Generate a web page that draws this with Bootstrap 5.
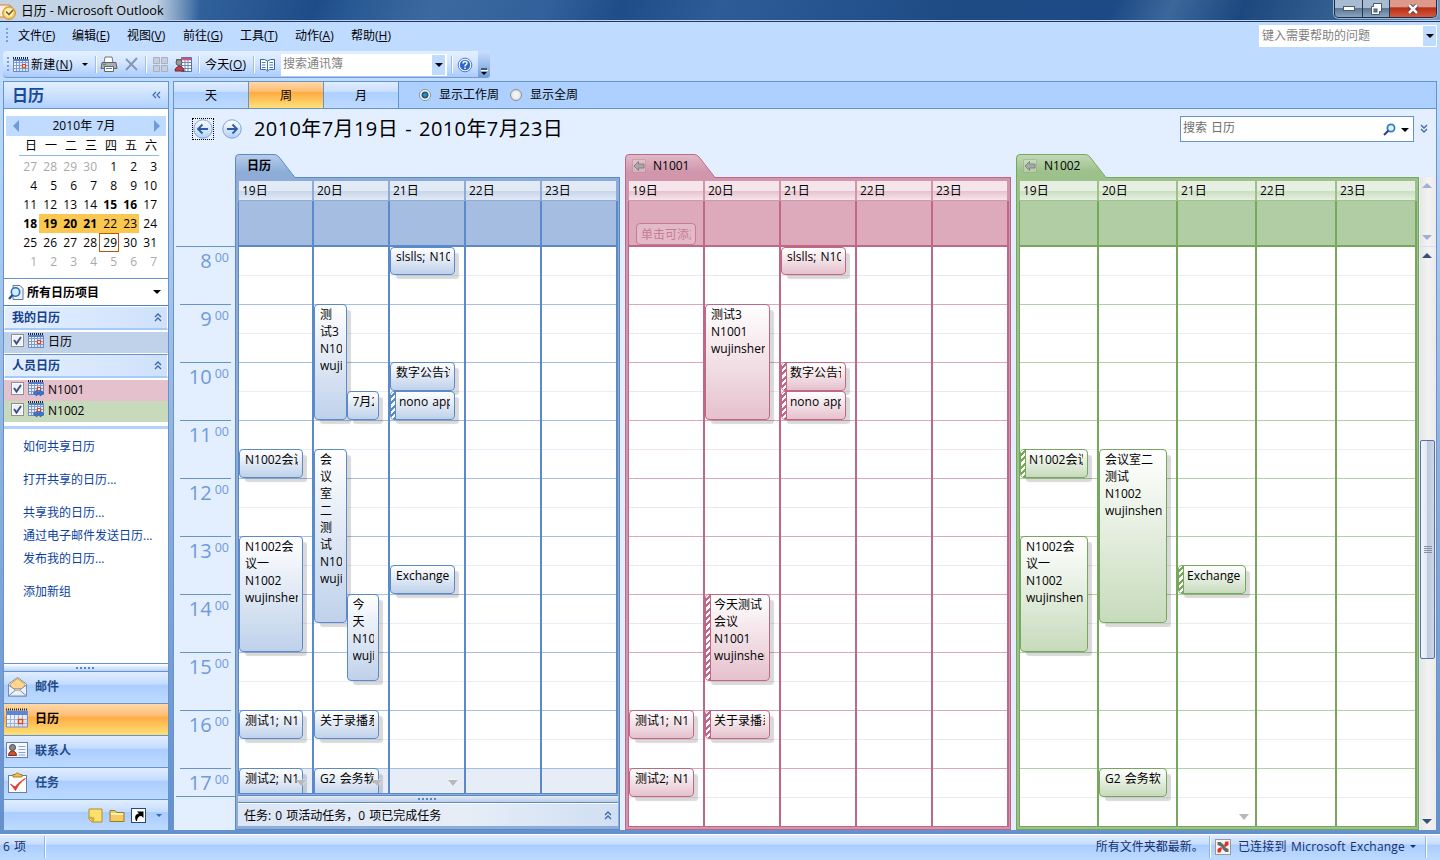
<!DOCTYPE html>
<html lang="zh-CN">
<head>
<meta charset="utf-8">
<title>日历 - Microsoft Outlook</title>
<link href="https://cdn.jsdelivr.net/npm/bootstrap@5.3.0/dist/css/bootstrap.min.css" rel="stylesheet">
<style>
:root{--line:#6593cf;--ink:#15428b}
body{font:12px/17px "Open Sans","Noto Sans CJK SC",sans-serif;word-spacing:1px;color:#000;background:#bfdbff;height:860px;overflow:hidden}
u{text-underline-offset:1px}
svg{display:block;flex:none}
.titlebar{height:22px;border-bottom:1px solid #20365c;box-shadow:inset 0 -1px #b9d3f2;padding-right:3px;
 background:linear-gradient(90deg,#c3d4e6 0,#c3d4e6 155px,rgba(195,212,230,0) 200px),linear-gradient(115deg,#6d8fb8 0,#31619a 14%,#1e4c88 22%,#275792 24%,#3c699f 30%,#31609a 38%,#1f4d88 43%,#2d5c97 50%,#1e4b84 66%,#1d4a84 77%,#3b679b 81%,#1c487f 86%,#3c6898 95%,#7899bc 100%)}
.titlebar b{font-weight:400;font-size:12.7px;margin-left:5px;word-spacing:0}
.winbtns{height:18px;border:1px solid #1b2d48;border-top:0;border-radius:0 0 5px 5px;overflow:hidden;box-shadow:0 0 0 1px #9db7d3}
.winbtns span{display:flex;align-items:center;justify-content:center;border-right:1px solid #26394f;background:linear-gradient(#a9bbd0 0 45%,#5a7391 46%,#8ba5bf)}
.winbtns .w-min{width:28px}.winbtns .w-max{width:27px}
.winbtns .w-close{width:46px;border:0;background:linear-gradient(#dd9a8c 0 40%,#b82d16 46%,#d3593c)}
.menurow{height:28px;padding-left:6px}
.menugrid{display:grid;grid-template-columns:12px 54px 55px 56px 57px 55px 56px 60px;align-items:center;padding-bottom:1px}
.grip{width:2px;height:15px;background:repeating-linear-gradient(#7aa0d4 0 2px,transparent 2px 4px)}
.helpbox{width:178px;height:22px;background:#fff;margin:3px 3px 0 0;color:#7f7f7f;padding:0 1px 2px 3px}
.dropbox{width:13px;align-self:stretch;margin:1px 0 -1px;background:#bfdbff}
.caret{width:0;height:0;border:4px solid transparent;border-top-color:#000;border-bottom:0}
.caret-s{border-width:3px;border-bottom:0}
.toolrow{height:27px;margin:1px 0 3px 3px;width:487px;display:grid;align-items:center;border-radius:4px;border-bottom:1px solid #6f9cd8;
 grid-template-columns:4px 6px 18px 46px 16px 7px 20px 23px 8px 20px 25px 7px 48px 7px 20px 3px 166px 8px 20px 3px 12px;background:linear-gradient(#e3efff,#d3e5ff 45%,#a9cbfa)}
.toolrow>span:not(.toolend){padding-bottom:1px}
.tsep{width:2px;height:17px;margin-left:2px;background:linear-gradient(90deg,#9abfee 50%,#fff 50%)}
.abox{height:22px;background:#fff;color:#7f7f7f;padding:0 2px 2px 2px}
.toolend{height:27px;border-radius:0 4px 4px 0;background:linear-gradient(#c9defc,#6f9cdc)}
.stage{height:753px;background:linear-gradient(#bfdbff,#8eb1df 50%,#6591cd 97%);padding:0 3px 4px;gap:4px}
.side{width:166px;border:1px solid var(--line);border-bottom:0;background:#fff}
.bluehead{height:27px;background:linear-gradient(#e3efff,#c9dfff 55%,#b1d1ff);border-bottom:1px solid var(--line)}
.side .bluehead b{font-size:16px;color:#1b4a9a;padding-left:8px}
.monthbar{height:20px;margin:7px 2px 0;background:#bfdbff;padding:0 7px}
.monthbar span{margin:-2px 5px 0 0;letter-spacing:.1px}
.tri-l,.tri-r{width:0;height:0;border:6px solid transparent}
.tri-l{border-right-color:#6f9cd8;border-left:0}.tri-r{border-left-color:#6f9cd8;border-right:0;margin-right:-1px}
.dategrid{display:grid;grid-template-columns:repeat(7,20px);margin:0 0 0 15px;width:140px;text-align:right;grid-template-rows:21px}
.dategrid span{height:19px;line-height:19px;padding-right:2px}
.dategrid .wk{height:20px;line-height:19px;border-bottom:1px solid #8db8f0}
.dategrid .off{color:#a9a9a9}.dategrid .sel{background:#fac750}.dategrid .today{outline:1px solid #bb5503;outline-offset:-1px}
.datewrap{height:143px;border-bottom:1px solid var(--line)}
.allitems{height:27px;padding:0 7px 0 4px;border-bottom:1px solid #4f7fc0}
.grouphead{height:24px;background:linear-gradient(90deg,#e3efff,#cfe1fb);border:1px solid #fff;border-bottom:2px solid #a6cafa;color:var(--ink);font-weight:700;padding:0 5px 0 7px}
.grouphead.lined{border-top-color:var(--line)}
.calrow{height:21px;padding:0 0 2px 7px;gap:4px}
.calrow svg{margin-top:-2px}
.row-b{background:#c0d1ea;margin:2px 0 1px}.row-p{background:#e5c1cd;margin-top:2px}.row-g{background:#c7dbbc}
.chk{width:13px;height:13px;border:1px solid #8e8f8f;background:#eef2f7;margin-top:-3px;box-shadow:inset 0 0 0 1px #fff}
.chk svg{margin:0!important}
.bluerule{height:3px;margin-top:4px;background:#b1d1ff;flex:none}
.linkz{padding:9px 0 0 19px;color:#0a3fa0}
.linkz div{height:23px;line-height:17px}.linkz .gapb{height:33px}
.split{height:8px;border-top:1px solid var(--line);background:linear-gradient(#fff,#b7d3fb)}
.dots{width:20px;height:2px;background:repeating-linear-gradient(90deg,#5a87c8 0 2px,transparent 2px 4px)}
.navbtn{height:32px;border-top:1px solid var(--line);background:linear-gradient(#e0edff,#c5dcff 40%,#aacdff 41%,#bedaff);color:#244b86;font-weight:700;gap:6px;padding:0 0 2px 1px}
.navbtn.on{background:linear-gradient(#ffd9aa,#ffbb6e 40%,#ffab3f 41%,#fee17b);color:#000}
.navtail{height:31px;border-top:1px solid var(--line);background:linear-gradient(#e0edff,#c5dcff 40%,#aacdff 41%,#bedaff);padding-right:6px;gap:6px}
.view{border:1px solid var(--line);border-bottom:0;background:#e3efff;min-width:0}
.vtabs{height:27px;background:#add0ff;border-bottom:1px solid var(--line)}
.vtab{width:75px;border-right:1px solid var(--line);background:linear-gradient(#e0edff,#c9dfff 38%,#add0ff 40%,#bedaff)}
.vtab.on{background:linear-gradient(#ffd9aa,#ffbb6e 38%,#ffab3f 40%,#fee17b)}
.radios{padding:0 0 1px 20px}.radios span{margin:0 11px 0 8px}
.radio{width:12px;height:12px;border:1px solid #8e8f8f;border-radius:50%;background:radial-gradient(#f2f2f2 30%,#d5d5d5)}
.radio.on{background:radial-gradient(#2e95c6 0 1px,#174a78 3px,#fff 4px)}
.range{height:45px;padding:7px 4px 0 18px}
.range h1{font-size:20px;line-height:26px;font-weight:400;letter-spacing:.4px;word-spacing:1.5px;margin:0 0 0 11px}
.findbox{width:234px;height:26px;border:1px solid var(--line);background:#fff;color:#6d6d6d;padding:0 4px 3px 2px}
.arrowball{margin-top:2px}.arrowball+.arrowball{margin-left:7px}
.focusdots{outline:1px dotted #000;outline-offset:-1px}
.board{height:676px}
.ruler{width:61px;padding-top:92px;color:#6f9bd8}
.ruler .hr{height:58px;border-top:1px solid var(--line);margin:0 4px 0 6px;display:flex;justify-content:flex-end;padding-right:2px}
.ruler .hr:first-child{margin:0 0 0 2px;padding-right:6px}
.ruler .hr:last-child{height:28px}
.hr b{font:400 20px/28px "Open Sans";margin-right:3px}
.hr sup{font:400 12.5px/21px "Open Sans";top:0}
.rulerend{height:1px;background:var(--line);margin-left:2px}
.cal{flex:none}
.cal-b{--edge:#5b8aca;--band:#8dadd8;--hd1:#e2eaf5;--hd2:#c8d7ec;--day:#a5bde0;--hour:#a5bfe1;--half:#e6edf7;--ev:#bfd1ea;width:385px;margin-right:5px}
.cal-p{--edge:#bf6786;--band:#d196ab;--hd1:#f5e5eb;--hd2:#e6c3cf;--day:#dcaabb;--hour:#dca9bb;--half:#f2e5ea;--ev:#e5c1cd;width:386px;margin-right:5px}
.cal-g{--edge:#77a75d;--band:#9dc18a;--hd1:#e6efe1;--hd2:#cbdfc1;--day:#b1cda4;--hour:#b2cfa5;--half:#e9f0e6;--ev:#c7dbbc;width:403px}
.caltab{height:24px;position:relative}
.caltab>svg{position:absolute;left:0;top:0;z-index:1}
.caltab span{position:relative;z-index:2;display:flex;align-items:center;height:23px;padding-left:7px;gap:7px}
.caltab .own{font-weight:700;padding-left:12px}
.calbody{height:653px;border:1px solid var(--edge);background:var(--band);padding:3px 1px 2px 2px;margin-top:-1px}
.days{display:grid}
.dhead{height:20px;line-height:19px;padding-left:3px;background:linear-gradient(var(--hd1),var(--hd1) 50%,var(--hd2) 55%,var(--hd1));border-right:2px solid var(--band);border-bottom:1px solid var(--band)}
.dhead:first-child,.dall:first-child,.dtime:first-child{border-left:1px solid var(--edge)}
.dhead:first-child{border-left-color:var(--band)}
.dall{height:46px;background:var(--day);border-right:2px solid var(--edge);border-bottom:2px solid var(--edge)}
.dtime{--lines:linear-gradient(transparent 57px,var(--hour) 57px) 0 0/100% 58px,linear-gradient(transparent 28px,var(--half) 28px 29px,transparent 29px) 0 0/100% 58px;
 position:relative;border-right:2px solid var(--edge);display:grid;grid-template-columns:1fr 1fr;grid-template-rows:28px repeat(19,29px);padding-right:9px;min-width:0;background:var(--lines),#fff}
.timegrid{height:580px;overflow:hidden}
.cal-p .timegrid,.cal-g .timegrid{border-bottom:1px solid var(--edge)}
.cal-b .timegrid{height:547px;border-bottom:1px solid var(--edge)}
.cal-b .dtime{background:linear-gradient(var(--half),var(--half)) 0 522px/100% 30px no-repeat,var(--lines),#fff}
.ev{border:1px solid var(--edge);border-radius:4px;background:linear-gradient(#fff,var(--ev));box-shadow:5px 5px 1px -1px rgba(0,0,0,.15);min-width:0;display:flex}
.ev p{margin:1px 4px 0 5px;overflow:hidden;flex:1;min-width:0}
.ev.top p{margin-top:0}
.ev p span{display:block;white-space:nowrap}
.ev.tent:before{content:"";width:5px;flex:none;border-right:1px solid var(--edge);border-radius:3px 0 0 3px;background:repeating-linear-gradient(135deg,#fff 0 2.5px,var(--edge) 2.5px 4.5px)}
.ev.tent p{margin-left:3px}
.addhint{margin:22px 7px 0 7px;height:22px;border:1px solid #c77b96;border-radius:4px;color:#c77b96;background:#e3bac8;overflow:hidden;white-space:nowrap;padding:2px 4px 0 4px}
.addhint span{display:block;overflow:hidden}
.more{position:absolute;width:0;height:0;border:5px solid transparent;border-top:6px solid #b9b9b9;border-bottom:0;filter:drop-shadow(0 0 1px #fff);right:6px;top:533px}
.cal-g .more{top:567px}
.taskbar{background:linear-gradient(90deg,#dce6f4,#e6edf7 60%,#d0dff2);height:23px;border-top:1px solid #fff;padding:0 6px 0 6px}
.tasksplit{height:8px;margin-top:1px;border-top:1px solid var(--edge);border-bottom:1px solid var(--edge);background:linear-gradient(#e3ebf6,#b9cde8)}
.bars{width:17px;margin-top:23px}
.sb{background:linear-gradient(90deg,#e6e6e6,#f3f3f3 50%,#ebebeb);width:16px;margin-left:1px}
.sb-s{height:69px;padding:6px 0 6px}
.sb-l{height:584px;border-top:1px solid #cfe0f7;padding:6px 0 5px}
.ar{width:0;height:0;border:5px solid transparent;border-top:5px solid #3b5079;border-bottom:0;margin:0 auto 0 2px}
.ar.up{border-top:0;border-bottom:5px solid #3b5079}
.ar.dim{border-top-color:#9fb0d6}.ar.up.dim{border-bottom-color:#9fb0d6}
.thumb{height:219px;width:15px;margin-top:182px;margin-bottom:160px;border:1px solid #5a70a0;border-radius:2px;background:linear-gradient(90deg,#f0f3f9,#e4e9f2 45%,#bccadf 50%,#ccd7e8)}
.gripper{width:8px;height:7px;background:repeating-linear-gradient(#8290a8 0 1px,transparent 1px 2px)}
.status{height:26px;color:#15306a;background:linear-gradient(#fff 0 1px,#e0edff 1px,#c5dcff 40%,#aacdff 41%,#bedaff);padding:0 13px 1px 3px}
.ssep{width:2px;height:22px;background:linear-gradient(90deg,#8fb5e8 50%,#fff 50%)}
.count{width:41px}
.conn{margin:0 5px 0 7px;letter-spacing:.2px}
</style>
</head>
<body class="d-flex flex-column">
<svg width="0" height="0" class="position-absolute">
 <defs>
  <linearGradient id="gb" x2="0" y2="1"><stop stop-color="#b9cde9"/><stop offset=".7" stop-color="#8dadd8"/></linearGradient>
  <linearGradient id="gp" x2="0" y2="1"><stop stop-color="#e2bac8"/><stop offset=".7" stop-color="#d196ab"/></linearGradient>
  <linearGradient id="gg" x2="0" y2="1"><stop stop-color="#c2d9b6"/><stop offset=".7" stop-color="#9dc18a"/></linearGradient>
  <linearGradient id="ball" x2="0" y2="1"><stop stop-color="#fff"/><stop offset="1" stop-color="#b4d0f5"/></linearGradient>
  <linearGradient id="sheet" x2="1" y2="1"><stop stop-color="#fff"/><stop offset="1" stop-color="#cfdcf3"/></linearGradient>
  <symbol id="cal" viewBox="0 0 16 16"><path d="M0 1h16" stroke="#222" stroke-width="2" stroke-dasharray="1 1"/><path d="M.5 2.500h15v12h-15z" fill="url(#sheet)" stroke="#6d88bd"/><path d="M1 2h14v2H1z" fill="#4f7bd0"/><path d="M3.500 4v10M6.500 4v10M9.500 4v10M12.500 4v10M1 5.500h14M1 8.500h14M1 11.500h14" stroke="#7f9bd0"/><path d="M9.500 7.500h3v3h-3z" fill="#fff" stroke="#e2481c" stroke-width="1.200"/></symbol>
  <symbol id="up2" viewBox="0 0 8 9"><path d="M1 4l3-3 3 3M1 8l3-3 3 3" fill="none" stroke="#3b68ad" stroke-width="1.300"/></symbol>
  <symbol id="shareic" viewBox="0 0 16 17"><use href="#cal" width="16" height="16"/><path d="M5 13l4-3v2h3v-2l4 3-4 3v-2H9v2z" fill="#3e78cf" stroke="#2a58a3" stroke-width=".6"/></symbol>
  <symbol id="ck" viewBox="0 0 11 11"><path d="M2 5l2.500 3.500L9 2" fill="none" stroke="#3c4f86" stroke-width="1.900"/></symbol>
  <symbol id="back" viewBox="0 0 14 14"><rect x=".5" y=".5" width="13" height="13" rx="1" fill="#fff" fill-opacity=".22" stroke="#888" stroke-opacity=".35"/><path d="M2 7l4.500-4.500V5H12v4H6.500v2.500z" fill="#a9a9a9" stroke="#7d7d7d" stroke-width=".9"/></symbol>
 </defs>
</svg>

<header class="titlebar d-flex align-items-center justify-content-between">
 <div class="d-flex align-items-center">
  <svg width="16" height="20" viewBox="0 0 16 20"><rect x="-2" y="4" width="13" height="12" rx="2" fill="#fff0dc" stroke="#e8782d"/><circle cx="9" cy="12" r="6.300" fill="#f6cf65" stroke="#c58a22"/><circle cx="9" cy="11.500" r="4.300" fill="#fff3c8"/><path d="M6 10.500l3 3 4-4.500" fill="none" stroke="#8b5a17" stroke-width="1.700"/></svg>
  <b>日历 - Microsoft Outlook</b>
 </div>
 <div class="winbtns d-flex align-self-start">
  <span class="w-min"><svg width="12" height="5"><rect x=".5" y=".5" width="11" height="4" fill="#fff" stroke="#4a5870"/></svg></span>
  <span class="w-max"><svg width="12" height="12"><path d="M3.500 .5h8v8h-2v3h-8v-8h2z" fill="#fff" stroke="#4a5870"/><rect x="4" y="6" width="3" height="3" fill="#6a83a0" stroke="#4a5870"/></svg></span>
  <span class="w-close"><svg width="12" height="10"><path d="M2 1l8 8M10 1L2 9" stroke="#4a3038" stroke-width="4.200"/><path d="M2 1l8 8M10 1L2 9" stroke="#fff" stroke-width="2.500"/></svg></span>
 </div>
</header>

<div class="menurow d-flex justify-content-between">
 <nav class="menugrid"><i class="grip"></i><span>文件(<u>F</u>)</span><span>编辑(<u>E</u>)</span><span>视图(<u>V</u>)</span><span>前往(<u>G</u>)</span><span>工具(<u>T</u>)</span><span>动作(<u>A</u>)</span><span>帮助(<u>H</u>)</span></nav>
 <div class="helpbox d-flex align-items-center justify-content-between">键入需要帮助的问题<span class="dropbox d-flex align-items-center justify-content-center"><i class="caret"></i></span></div>
</div>

<div class="toolrow">
 <i></i><i class="grip"></i>
 <svg width="16" height="16"><use href="#cal"/></svg>
 <span class="text-nowrap" style="letter-spacing:.35px">新建(<u>N</u>)</span>
 <i class="caret caret-s" style="margin-left:5px"></i><i class="tsep"></i>
 <svg width="18" height="17" viewBox="0 0 18 17"><path d="M5 1h7l1 6H4z" fill="#fff" stroke="#777"/><path d="M2 6.500h14l1 6H1z" fill="#a8adb8" stroke="#5d6470"/><path d="M4.500 10.500h9v5h-9z" fill="#fff" stroke="#666"/><path d="M6 12.500h6" stroke="#4e81cf"/><path d="M3 8.500h3" stroke="#5c9c3e" stroke-width="1.500"/></svg>
 <svg width="20" height="15" viewBox="0 0 20 15"><path d="M6 2l11 11M17 1L6 13" stroke="#8296ba" stroke-width="1.900" fill="none"/></svg>
 <i class="tsep"></i>
 <svg width="18" height="16" viewBox="0 0 18 16"><path d="M2.500.5h6v6h-6zM10.500.5h6v6h-6zM2.500 8.500h6v6h-6zM10.500 8.500h6v6h-6z" fill="#c7ced8" stroke="#a5b1c2"/></svg>
 <svg width="22" height="17" viewBox="0 0 22 17"><path d="M10.500 1.500h10v14h-10z" fill="#fff" stroke="#5472a7"/><path d="M11 3h9" stroke="#d55087" stroke-width="2.500"/><path d="M11 6.500h9M11 9.500h9M11 12.500h9M14 4v11M17 4v11" stroke="#6e89b9"/><rect x="5" y="3" width="6" height="5" fill="#777"/><circle cx="8" cy="6.500" r="3" fill="#999" stroke="#555"/><path d="M4 15c0-6 9-6 9 0z" fill="#c83c45" stroke="#6f2730"/></svg>
 <i class="tsep"></i>
 <span class="text-nowrap" style="padding-left:2px;letter-spacing:.15px">今天(<u>O</u>)</span>
 <i class="tsep"></i>
 <svg width="18" height="15" viewBox="0 0 18 15"><path d="M2.500 2.500h4L9.500 4l3-1.500h4v10h-5L9.500 14l-2-1.500h-5z" fill="#fff" stroke="#3663a8"/><path d="M9.500 4v9.500M4 5.500h3.500M4 8h3.500M4 10.500h3.500M11.500 5.500H15M11.500 8H15M11.500 10.500H15" stroke="#4474ba"/></svg>
 <i></i>
 <div class="abox d-flex align-items-center justify-content-between">搜索通讯簿<span class="dropbox d-flex align-items-center justify-content-center"><i class="caret"></i></span></div>
 <i class="tsep ms-1"></i>
 <svg width="18" height="16" viewBox="0 0 18 16"><circle cx="10" cy="8" r="6.800" fill="#fff" stroke="#4e78c4"/><circle cx="10" cy="8" r="5.200" fill="#2f66cc"/><path d="M8 6.500c0-3 4.300-2.500 4 0-.2 1.300-2 1.200-2 3M10 10.500v1.500" stroke="#fff" stroke-width="1.500" fill="none"/></svg>
 <i></i>
 <span class="toolend d-flex align-items-end justify-content-center"><svg width="8" height="10"><path d="M1 1h6" stroke="#000"/><path d="M1 2.500h7" stroke="#fff"/><path d="M1 4h6L4 7z"/></svg></span>
</div>

<div class="stage d-flex">
 <aside class="side d-flex flex-column">
  <div class="bluehead d-flex align-items-center justify-content-between"><b>日历</b><svg width="9" height="8" style="margin-right:7px"><path d="M4 1L1 4l3 3M8 1L5 4l3 3" fill="none" stroke="#3b68ad" stroke-width="1.200"/></svg></div>
  <div class="monthbar d-flex align-items-center justify-content-between"><i class="tri-l"></i><span>2010年 7月</span><i class="tri-r"></i></div>
  <div class="datewrap"><div class="dategrid" id="mini"></div></div>
  <div class="allitems d-flex align-items-center">
   <svg width="17" height="17" viewBox="0 0 17 17"><path d="M5 1.500h7l3 3v11H5z" fill="#eaf1fb" stroke="#61779b"/><circle cx="7.500" cy="8" r="4.200" fill="#d4ecfb" stroke="#2d6fb9" stroke-width="1.600"/><path d="M4.500 11L1 15" stroke="#1c4f95" stroke-width="2.200"/></svg>
   <b class="flex-grow-1" style="padding-left:2px">所有日历项目</b><i class="caret"></i></div>
  <div class="grouphead d-flex align-items-center justify-content-between">我的日历<svg width="8" height="9"><use href="#up2"/></svg></div>
  <div class="calrow row-b d-flex align-items-center"><span class="chk"><svg width="11" height="11"><use href="#ck"/></svg></span><svg width="16" height="16"><use href="#cal"/></svg>日历</div>
  <div class="grouphead lined d-flex align-items-center justify-content-between">人员日历<svg width="8" height="9"><use href="#up2"/></svg></div>
  <div class="calrow row-p d-flex align-items-center"><span class="chk"><svg width="11" height="11"><use href="#ck"/></svg></span><svg width="16" height="17"><use href="#shareic"/></svg>N1001</div>
  <div class="calrow row-g d-flex align-items-center"><span class="chk"><svg width="11" height="11"><use href="#ck"/></svg></span><svg width="16" height="17"><use href="#shareic"/></svg>N1002</div>
  <div class="bluerule"></div>
  <div class="linkz flex-grow-1"><div class="gapb">如何共享日历</div><div class="gapb">打开共享的日历...</div><div>共享我的日历...</div><div>通过电子邮件发送日历...</div><div class="gapb">发布我的日历...</div><div>添加新组</div></div>
  <div class="split d-flex align-items-center justify-content-center"><i class="dots"></i></div>
  <div class="navbtn d-flex align-items-center"><svg width="24" height="24" viewBox="0 0 24 24"><path d="M3.500 9l9-6.500 9 6.500v12h-18z" fill="#fff" stroke="#7a8cab"/><path d="M5 9.500l7.500-6 7.500 6-2 4H7z" fill="#ffd68d" stroke="#d8a049"/><path d="M3.500 10l7 5h4l7-5v11h-18z" fill="#e9f1fb" stroke="#7a8cab"/><path d="M3.500 21l7-6M21.500 21l-7-6" stroke="#7a8cab"/></svg>邮件</div>
  <div class="navbtn on d-flex align-items-center"><svg width="24" height="22" viewBox="0 0 24 22"><path d="M1 1.500h22" stroke="#222" stroke-width="2" stroke-dasharray="1 1"/><path d="M1.500 3h21v16h-21z" fill="url(#sheet)" stroke="#7d93bb"/><path d="M1.500 3h21v4h-21z" fill="#5b86d6"/><path d="M5.500 7v12M9.500 7v12M13.500 7v12M17.500 7v12M2 11.500h20M2 15.500h20" stroke="#9db3da"/><path d="M13.500 11.500h4v4h-4z" fill="#fff" stroke="#e2481c" stroke-width="1.500"/></svg>日历</div>
  <div class="navbtn d-flex align-items-center"><svg width="24" height="20" viewBox="0 0 24 20"><rect x="1.500" y="1.500" width="21" height="15" fill="#f5f9ff" stroke="#6b7fa5"/><circle cx="7.500" cy="6.500" r="3" fill="#888" stroke="#444"/><path d="M3.500 14.500c0-6 8-6 8 0z" fill="#cf4f2e" stroke="#7b2d1a"/><path d="M13.500 5.500h7M13.500 8.500h7M13.500 11.500h7M13.500 14h7" stroke="#7fa3dc"/></svg>联系人</div>
  <div class="navbtn d-flex align-items-center"><svg width="24" height="24" viewBox="0 0 24 24"><rect x="3.500" y="4.500" width="18" height="17" fill="#fff" stroke="#6b7fa5"/><path d="M8 6V3.500h2.500c0-2 4-2 4 0H17V6z" fill="#eec155" stroke="#b07c1d"/><path d="M5.500 13l5 6.500c3-6 6-9 10-12-3 1.500-7 4-10.500 8.500z" fill="#e23a2c" stroke="#e23a2c" stroke-width=".8"/></svg>任务</div>
  <div class="navtail d-flex align-items-center justify-content-end">
   <svg width="15" height="15"><path d="M1 1h13v13H4l-3-3z" fill="#fbe06b" stroke="#b1902a"/><path d="M1 9l5 1-1 4" fill="#e3b530" stroke="#b1902a" stroke-width=".7"/></svg>
   <svg width="16" height="14"><path d="M1 2.500h5l1.500 2H15v9H1z" fill="#f3cd62" stroke="#9c7a22"/><path d="M2 6h12" stroke="#fff1b5" stroke-width="2"/></svg>
   <svg width="15" height="15"><rect x=".5" y=".5" width="14" height="14" fill="#fff" stroke="#28477d"/><path d="M5 13c-2-5 0-7 3-7.500L6 3.500h6.500V10l-2-2C7.500 8 6 10 6 13z"/></svg>
   <i class="caret caret-s ms-1" style="border-top-color:#3b68ad"></i>
  </div>
 </aside>

 <main class="view flex-grow-1">
  <div class="vtabs d-flex align-items-stretch">
   <span class="vtab d-flex align-items-center justify-content-center">天</span><span class="vtab on d-flex align-items-center justify-content-center">周</span><span class="vtab d-flex align-items-center justify-content-center">月</span>
   <div class="radios d-flex align-items-center"><i class="radio on"></i><span>显示工作周</span><i class="radio"></i><span>显示全周</span></div>
  </div>
  <div class="range d-flex align-items-start">
   <svg width="22" height="22" viewBox="0 0 22 22" class="arrowball focusdots"><circle cx="11" cy="11" r="9.200" fill="url(#ball)" stroke="#7aa5dd"/><path d="M16 11H6.500M10.500 6.500L6 11l4.500 4.500" fill="none" stroke="#2d5ca6" stroke-width="1.800"/></svg>
   <svg width="22" height="22" viewBox="0 0 22 22" class="arrowball"><circle cx="11" cy="11" r="9.200" fill="url(#ball)" stroke="#7aa5dd"/><path d="M6 11h9.500M11.500 6.500L16 11l-4.500 4.500" fill="none" stroke="#2d5ca6" stroke-width="1.800"/></svg>
   <h1>2010年7月19日 - 2010年7月23日</h1>
   <div class="findbox ms-auto d-flex align-items-center"><span class="flex-grow-1">搜索 日历</span><svg width="14" height="14" class="me-1 mt-1"><circle cx="8" cy="5" r="3.600" fill="#e2f3ff" stroke="#2f7fc4" stroke-width="1.800"/><path d="M5.500 7.500L1 12" stroke="#27488f" stroke-width="2.200"/></svg><i class="caret mt-1"></i></div>
   <svg width="8" height="9" style="margin:8px 4px 0 6px"><path d="M1 1l3 3 3-3M1 5l3 3 3-3" fill="none" stroke="#3b68ad" stroke-width="1.300"/></svg>
  </div>
  <div class="board d-flex">
   <div class="ruler"><div id="hours"></div><div class="rulerend"></div></div>
   <section class="cal cal-b"><div class="caltab"><svg width="62" height="25"><path d="M.5 25V4Q.5.500 4 .500H39Q42 .500 44 3L60 24V25z" fill="url(#gb)"/><path d="M.5 25V4Q.5.500 4 .500H39Q42 .500 44 3L60 23.500" fill="none" stroke="#5b8aca"/></svg><span class="own">日历</span></div>
    <div class="calbody" data-cal="b"></div></section>
   <section class="cal cal-p"><div class="caltab"><svg width="92" height="25"><path d="M.5 25V4Q.5.500 4 .500H69Q72 .500 74 3L90 24V25z" fill="url(#gp)"/><path d="M.5 25V4Q.5.500 4 .500H69Q72 .500 74 3L90 23.500" fill="none" stroke="#bf6786"/></svg><span><svg width="14" height="14"><use href="#back"/></svg>N1001</span></div>
    <div class="calbody" data-cal="p"></div></section>
   <section class="cal cal-g"><div class="caltab"><svg width="92" height="25"><path d="M.5 25V4Q.5.500 4 .500H69Q72 .500 74 3L90 24V25z" fill="url(#gg)"/><path d="M.5 25V4Q.5.500 4 .500H69Q72 .500 74 3L90 23.500" fill="none" stroke="#77a75d"/></svg><span><svg width="14" height="14"><use href="#back"/></svg>N1002</span></div>
    <div class="calbody" data-cal="g"></div></section>
   <div class="bars"><div class="sb sb-s d-flex flex-column justify-content-between"><i class="ar up dim"></i><i class="ar dim"></i></div>
    <div class="sb sb-l"><i class="ar up d-block"></i><div class="thumb d-flex align-items-center justify-content-center"><i class="gripper"></i></div><i class="ar d-block"></i></div></div>
  </div>
 </main>
</div>

<footer class="status d-flex align-items-center"><span class="count">6 项</span><i class="ssep"></i><span class="ms-auto">所有文件夹都最新。</span><i class="ssep" style="margin:0 4px 0 5px"></i>
 <svg width="16" height="16"><rect x=".5" y=".5" width="15" height="15" fill="#f5f5f5" stroke="#999"/><path d="M2.500 3h3l3 2.500 2 3 3 1.500v3h-3L8 10.500l-2-3-3.500-1.500z" fill="#6a6a6a"/><path d="M13.500 2.500v3.500l-3 2L9 6.500l1.500-4zM2.500 13.500V10l3.500-2 1 1.500-1.500 4z" fill="#e2321c"/></svg>
 <span class="conn">已连接到 Microsoft Exchange</span><i class="caret caret-s" style="border-top-color:#15306a;margin-right:9px"></i><i class="ssep"></i></footer>

<script src="https://cdn.jsdelivr.net/npm/bootstrap@5.3.0/dist/js/bootstrap.bundle.min.js"></script>
<script>
// Mini month: weekday names, then six weeks starting 27 June
const mini = document.getElementById('mini');
let m = '日一二三四五六'.split('').map(d => `<span class="wk">${d}</span>`).join('');
for (let i = 0; i < 42; i++) {
  const day = i - 3, n = day < 1 ? day + 30 : day > 31 ? day - 31 : day;
  const c = [];
  if (day < 1 || day > 31) c.push('off');
  else {
    if (day >= 19 && day <= 23) c.push('sel');
    if ([15, 16, 18, 19, 20, 21].includes(day)) c.push('fw-bold');
    if (day === 29) c.push('today');
  }
  m += `<span class="${c.join(' ')}">${n}</span>`;
}
mini.innerHTML = m;
let h = '';
for (let i = 8; i < 18; i++) h += `<div class="hr"><b>${i}</b><sup>00</sup></div>`;
document.getElementById('hours').innerHTML = h;

// Events: day, start slot (half hours from 8:00), length, lane (0 = full width), tentative, text lines
const data = {
  b: {cols: [76, 76, 76, 76, 76], more: [0, 1, 2], ev: [
    [0, 7, 1, 0, 0, ['N1002会议']], [0, 10, 4, 0, 0, ['N1002会', '议一', 'N1002', 'wujinshen']],
    [0, 16, 1, 0, 0, ['测试1; N1']], [0, 18, 1, 0, 0, ['测试2; N1']],
    [1, 2, 4, 1, 0, ['测', '试3', 'N10', 'wuji']], [1, 5, 1, 2, 0, ['7月2']],
    [1, 7, 6, 1, 0, ['会', '议', '室', '二', '测', '试', 'N10', 'wuji']],
    [1, 12, 3, 2, 0, ['今', '天', 'N10', 'wuji']], [1, 16, 1, 0, 0, ['关于录播系']], [1, 18, 1, 0, 0, ['G2 会务软']],
    [2, 0, 1, 0, 0, ['slslls; N10']], [2, 4, 1, 0, 0, ['数字公告讨']], [2, 5, 1, 0, 1, ['nono app']], [2, 11, 1, 0, 0, ['Exchange']]]},
  p: {cols: [77, 76, 76, 76, 76], more: [], ev: [
    [0, 16, 1, 0, 0, ['测试1; N1']], [0, 18, 1, 0, 0, ['测试2; N1']],
    [1, 2, 4, 0, 0, ['测试3', 'N1001', 'wujinshen']], [1, 12, 3, 0, 1, ['今天测试', '会议', 'N1001', 'wujinshen']], [1, 16, 1, 0, 1, ['关于录播系']],
    [2, 0, 1, 0, 0, ['slslls; N10']], [2, 4, 1, 0, 1, ['数字公告讨']], [2, 5, 1, 0, 1, ['nono app']]]},
  g: {cols: [80, 79, 79, 80, 80], more: [2], ev: [
    [0, 7, 1, 0, 1, ['N1002会议']], [0, 10, 4, 0, 0, ['N1002会', '议一', 'N1002', 'wujinshen']],
    [1, 7, 6, 0, 0, ['会议室二', '测试', 'N1002', 'wujinshen']], [1, 18, 1, 0, 0, ['G2 会务软']], [2, 11, 1, 0, 1, ['Exchange']]]}
};
for (const k in data) {
  const c = data[k], t = c.cols.map(w => w + 'px').join(' ');
  let a = '', b = '', d = '';
  c.cols.forEach((w, i) => {
    a += `<div class="dhead">${19 + i}日</div>`;
    b += `<div class="dall">${k === 'p' && i === 0 ? '<div class="addhint"><span>单击可添加</span></div>' : ''}</div>`;
    d += `<div class="dtime">` + c.ev.filter(e => e[0] === i).map(e =>
      `<div class="ev${e[4] ? ' tent' : ''}${e[1] ? '' : ' top'}" style="grid-row:${e[1] + 1}/span ${e[2]};grid-column:${e[3] ? e[3] : '1/3'}"><p>${e[5].map(s => `<span>${s}</span>`).join('')}</p></div>`).join('') +
      (c.more.includes(i) ? '<i class="more"></i>' : '') + `</div>`;
  });
  document.querySelector(`[data-cal=${k}]`).innerHTML =
    `<div class="days" style="grid-template-columns:${t}">${a}</div><div class="days" style="grid-template-columns:${t}">${b}</div>` +
    `<div class="days timegrid" style="grid-template-columns:${t}">${d}</div>` +
    (k === 'b' ? '<div class="tasksplit d-flex align-items-center justify-content-center"><i class="dots"></i></div><div class="taskbar d-flex align-items-center justify-content-between">任务: 0 项活动任务，0 项已完成任务<svg width="8" height="9"><use href="#up2"/></svg></div>' : '');
}
</script>
</body>
</html>
